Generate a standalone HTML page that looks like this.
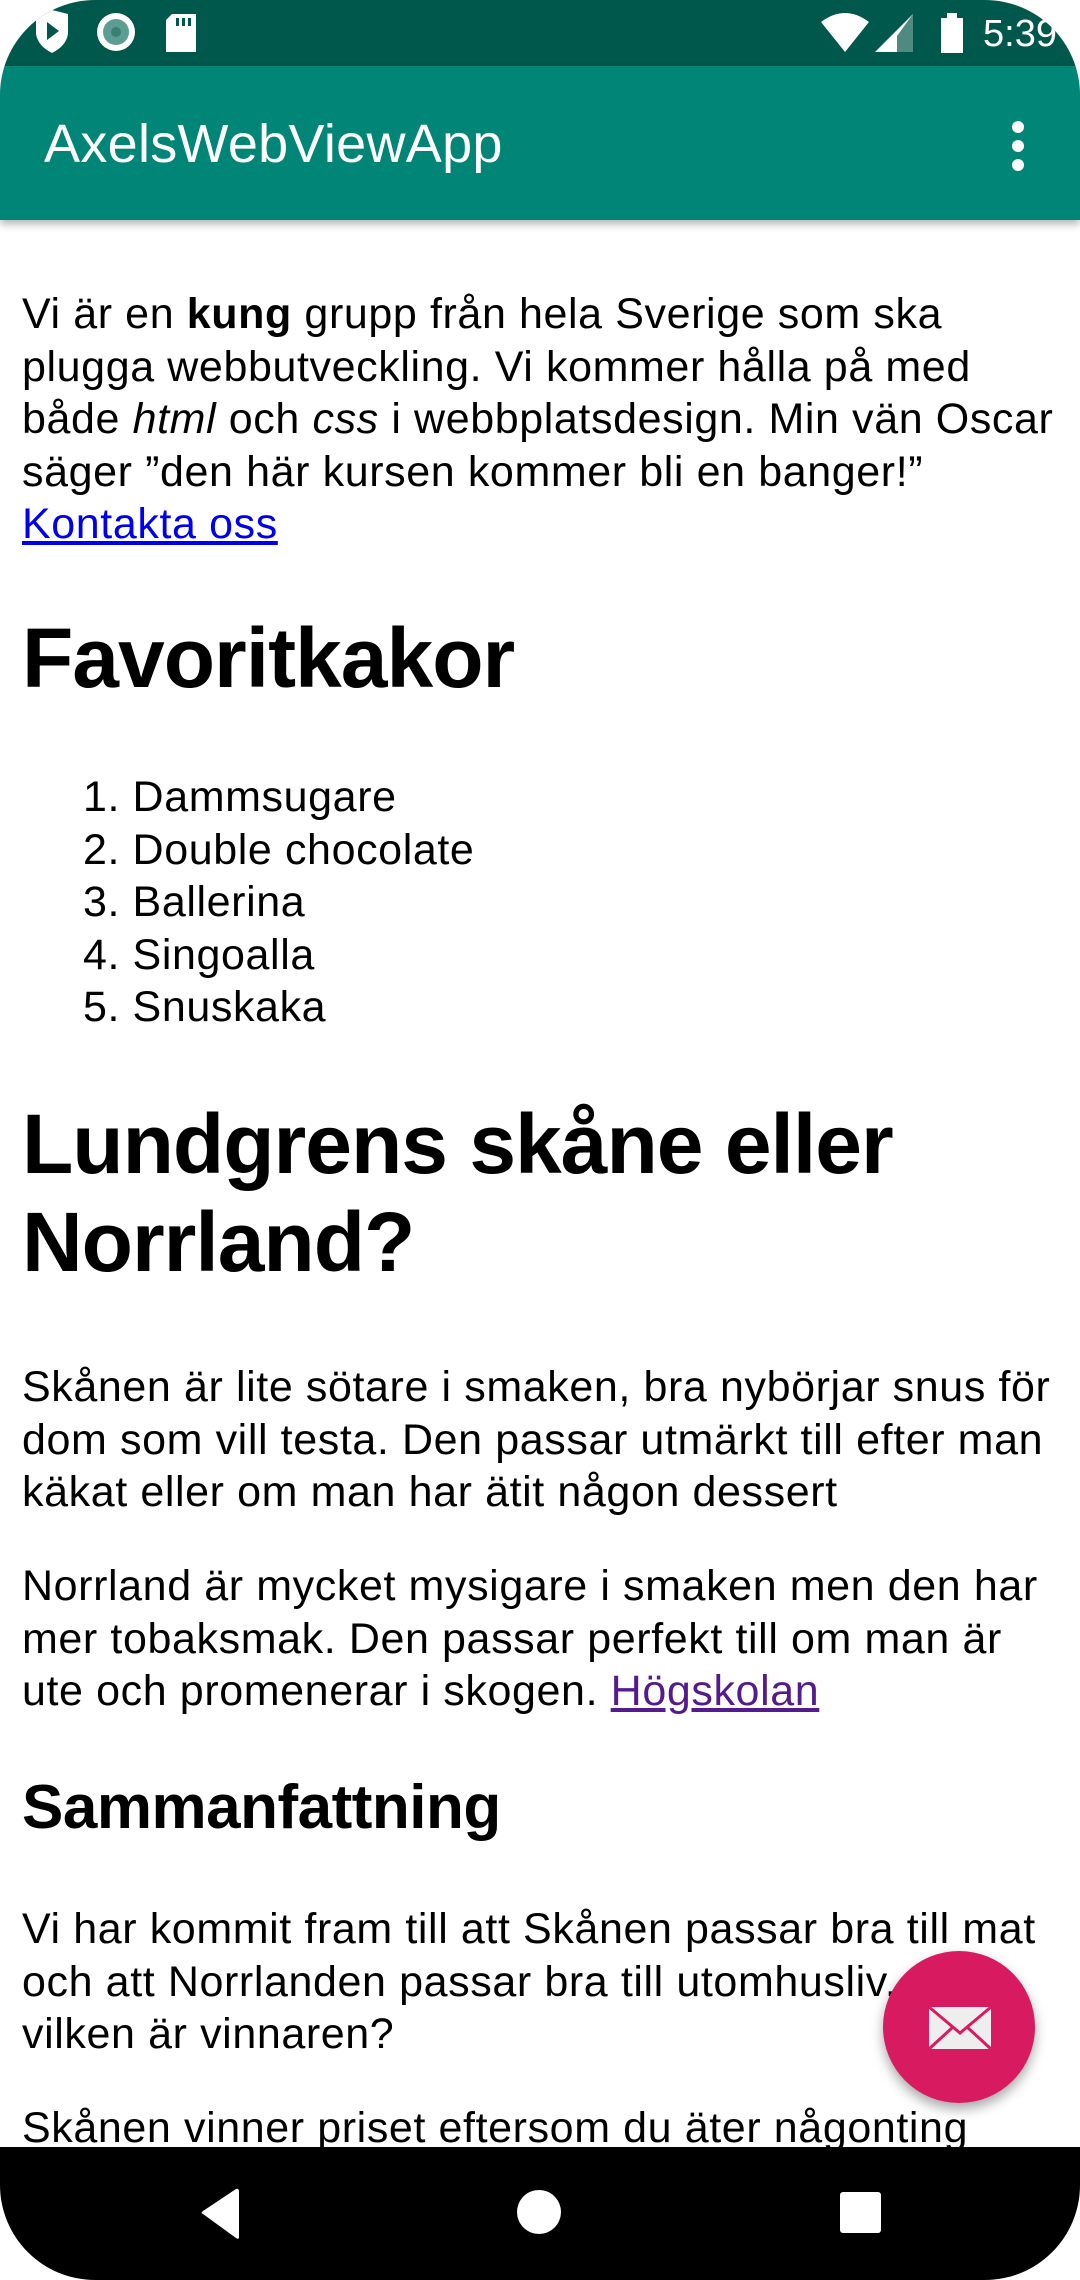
<!DOCTYPE html>
<html><head><meta charset="utf-8">
<style>
html,body{margin:0;padding:0;}
body{width:1080px;height:2280px;position:relative;overflow:hidden;background:#fff;font-family:"Liberation Sans",Arial,sans-serif;color:#000;}
.screen{position:absolute;left:0;top:0;width:1080px;height:2280px;border-radius:95px;overflow:hidden;background:#fff;}
.status{position:absolute;left:0;top:0;width:1080px;height:66px;background:#00574b;}
.appbar{position:absolute;left:0;top:66px;width:1080px;height:154px;background:#008577;box-shadow:0 4px 8px rgba(0,0,0,.3);z-index:2;}
.title{position:absolute;left:44px;top:46px;font-size:54px;color:#fff;line-height:64px;letter-spacing:0.3px;}
.dots{position:absolute;left:1012px;top:55px;width:12px;}
.dots i{display:block;width:12px;height:12px;border-radius:6px;background:#fff;margin-bottom:7px;}
.b{position:absolute;left:22px;font-size:43px;line-height:52.5px;white-space:nowrap;letter-spacing:0.6px;}
.h1{position:absolute;left:22px;font-size:84px;line-height:98px;font-weight:bold;white-space:nowrap;letter-spacing:-1px;}
.h2{position:absolute;left:22px;font-size:62px;line-height:74px;font-weight:bold;white-space:nowrap;letter-spacing:-0.5px;}
.ol .n{display:inline-block;width:120px;text-align:right;}
a{text-decoration:underline;}
.nav{position:absolute;left:0;top:2147px;width:1080px;height:133px;background:#000;}
.fab{position:absolute;left:883px;top:1951px;width:152px;height:152px;border-radius:50%;background:#d81b60;box-shadow:0 6px 12px rgba(0,0,0,.35);z-index:3;}
</style></head><body>
<div class="screen">
<div class="status">
  <svg width="1080" height="66" style="position:absolute;left:0;top:0">
    <path d="M36 14 L52 10 L68 14 L68 34 Q66 46 52 53 Q38 46 36 34 Z" fill="#fff"/>
    <path d="M47 22 L59 31 L47 40 Z" fill="#00574b"/>
    <circle cx="116" cy="32" r="19" fill="#fff"/>
    <circle cx="116" cy="32" r="13" fill="#5d9c92"/>
    <circle cx="116" cy="32" r="5" fill="#3b7f74"/>
    <path d="M172 14 L196 14 L196 52 L166 52 L166 20 Z" fill="#fff"/>
    <rect x="176" y="18" width="3" height="8" fill="#00574b"/><rect x="182" y="18" width="3" height="8" fill="#00574b"/><rect x="188" y="18" width="3" height="8" fill="#00574b"/>
    <path d="M821 22 Q845 4 869 22 L845 52 Z" fill="#fff"/>
    <path d="M875 52 L913 14 L913 52 Z" fill="#fff"/>
    <path d="M897 36 L913 14 L913 52 L897 52 Z" fill="#4f8a80"/>
    <rect x="941" y="18" width="22" height="35" fill="#fff"/><rect x="947" y="13" width="10" height="6" fill="#fff"/>
    <text x="983" y="46" font-family="Liberation Sans" font-size="38" fill="#fff">5:39</text>
  </svg>
</div>
<div class="appbar">
  <div class="title">AxelsWebViewApp</div>
  <div class="dots"><i></i><i></i><i></i></div>
</div>

<div class="b" style="top:288px">Vi är en <b>kung</b> grupp från hela Sverige som ska<br>plugga webbutveckling. Vi kommer hålla på med<br>både <i>html</i> och <i>css</i> i webbplatsdesign. Min vän Oscar<br>säger ”den här kursen kommer bli en banger!”<br><a style="color:#0000ee">Kontakta oss</a></div>

<div class="h1" style="top:609px">Favoritkakor</div>

<div class="b ol" style="top:771px;left:0"><span class="n">1.</span> Dammsugare<br><span class="n">2.</span> Double chocolate<br><span class="n">3.</span> Ballerina<br><span class="n">4.</span> Singoalla<br><span class="n">5.</span> Snuskaka</div>

<div class="h1" style="top:1095px">Lundgrens skåne eller<br>Norrland?</div>

<div class="b" style="top:1361px">Skånen är lite sötare i smaken, bra nybörjar snus för<br>dom som vill testa. Den passar utmärkt till efter man<br>käkat eller om man har ätit någon dessert</div>

<div class="b" style="top:1560px">Norrland är mycket mysigare i smaken men den har<br>mer tobaksmak. Den passar perfekt till om man är<br>ute och promenerar i skogen. <a style="color:#551a8b">Högskolan</a></div>

<div class="h2" style="top:1771px">Sammanfattning</div>

<div class="b" style="top:1903px">Vi har kommit fram till att Skånen passar bra till mat<br>och att Norrlanden passar bra till utomhusliv, men<br>vilken är vinnaren?</div>

<div class="b" style="top:2102px">Skånen vinner priset eftersom du äter någonting</div>

<div class="fab">
  <svg width="152" height="152" style="position:absolute;left:0;top:0">
    <rect x="46" y="56" width="62" height="42" fill="#eee"/>
    <path d="M46 56 L77 82 L108 56" fill="none" stroke="#d81b60" stroke-width="3"/>
    <path d="M46 98 L70 76 M108 98 L84 76" fill="none" stroke="#d81b60" stroke-width="3"/>
  </svg>
</div>

<div class="nav">
  <svg width="1080" height="133" style="position:absolute;left:0;top:0">
    <path d="M239 45 L239 90 Q239 93 236 91 L203 67 Q200 66 203 64 L236 42 Q239 41 239 45 Z" fill="#fff"/>
    <ellipse cx="539" cy="65" rx="22" ry="22" fill="#fff"/>
    <rect x="840" y="45" width="41" height="41" rx="3" fill="#fff"/>
  </svg>
</div>
</div>
</body></html>
